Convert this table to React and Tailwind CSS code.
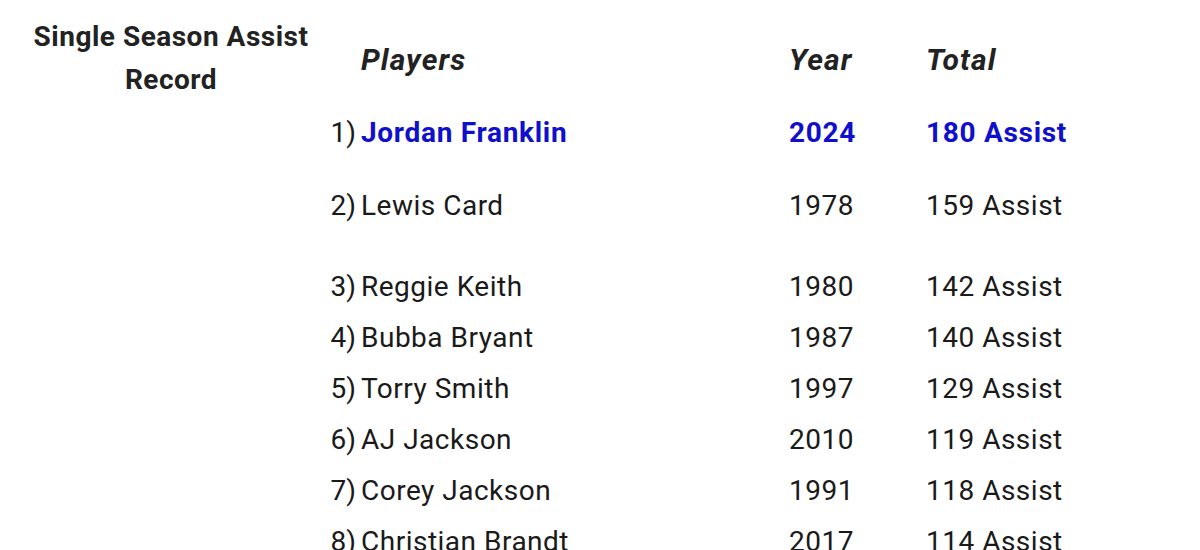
import React from 'react';

const rows = [
  { n: 1, name: 'Jordan Franklin', year: '2024', total: '180 Assist', top: true },
  { n: 2, name: 'Lewis Card', year: '1978', total: '159 Assist' },
  { n: 3, name: 'Reggie Keith', year: '1980', total: '142 Assist' },
  { n: 4, name: 'Bubba Bryant', year: '1987', total: '140 Assist' },
  { n: 5, name: 'Torry Smith', year: '1997', total: '129 Assist' },
  { n: 6, name: 'AJ Jackson', year: '2010', total: '119 Assist' },
  { n: 7, name: 'Corey Jackson', year: '1991', total: '118 Assist' },
  { n: 8, name: 'Christian Brandt', year: '2017', total: '114 Assist' },
];

const gaps = ['mt-[22px]', 'mt-[22px]', 'mt-[30px]', '', '', '', '', ''];

const Row = ({ row, className }) => {
  const cell = row.top ? 'font-bold text-[#1010cc] tracking-[0.7px]' : 'text-[#1a1a1a] tracking-[0.5px]';
  return (
    <div className={`grid grid-cols-[30px_433px_137px_auto] h-[51px] items-center whitespace-nowrap ${className}`}>
      <span className="text-right text-[#1a1a1a]">{row.n})</span>
      <span className={`pl-[5px] ${cell}`}>{row.name}</span>
      <span className={cell}>{row.year}</span>
      <span className={cell}>{row.total}</span>
    </div>
  );
};

export default function App() {
  return (
    <div className="w-[1200px] h-[550px] overflow-hidden bg-white flex font-['Roboto',sans-serif]">
      <div className="w-[326px] pl-[16px] pt-[15px] text-center">
        <h2 className="text-[28px] leading-[43px] font-bold tracking-[0.5px] text-[#222]">
          Single Season Assist Record
        </h2>
      </div>
      <div className="flex-1 pt-[34px] text-[28px] leading-[51px]">
        <div className="grid grid-cols-[30px_433px_137px_auto] h-[51px] items-center text-[30px] font-bold italic tracking-[1.1px] text-[#222]">
          <span></span>
          <span className="pl-[5px]">Players</span>
          <span>Year</span>
          <span>Total</span>
        </div>
        {rows.map((row, i) => (
          <Row key={row.n} row={row} className={gaps[i]} />
        ))}
      </div>
    </div>
  );
}
